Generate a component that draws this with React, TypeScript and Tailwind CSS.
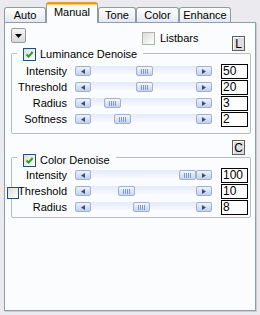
import React from 'react';

type Row = { label: string; value: string; thumb: number };

const LUMINANCE: Row[] = [
  { label: 'Intensity', value: '50', thumb: 61 },
  { label: 'Threshold', value: '20', thumb: 61 },
  { label: 'Radius', value: '3', thumb: 29 },
  { label: 'Softness', value: '2', thumb: 39 },
];

const COLOR: Row[] = [
  { label: 'Intensity', value: '100', thumb: 104 },
  { label: 'Threshold', value: '10', thumb: 43 },
  { label: 'Radius', value: '8', thumb: 58 },
];

const TABS = [
  { name: 'Auto', w: 'w-[42px]' },
  { name: 'Manual', w: 'w-[52px]' },
  { name: 'Tone', w: 'w-[38px]' },
  { name: 'Color', w: 'w-[43px]' },
  { name: 'Enhance', w: 'w-[52px]' },
];

const CheckBox = ({ checked, muted }: { checked?: boolean; muted?: boolean }) => (
  <div
    className={`w-[13px] h-[13px] shrink-0 border flex items-center justify-center bg-gradient-to-br from-[#dcdcd7] to-white ${
      muted ? 'border-[#b3b3ad]' : 'border-[#1c5180]'
    }`}
  >
    {checked && (
      <svg width="9" height="9" viewBox="0 0 9 9">
        <path d="M1.5 4.5 L3.6 6.6 L7.6 2" fill="none" stroke="#21a121" strokeWidth="2" />
      </svg>
    )}
  </div>
);

const ArrowBtn = ({ dir }: { dir: 'left' | 'right' }) => (
  <div className="w-[16px] h-[10px] rounded-[2px] border border-[#9db0d8] bg-gradient-to-b from-[#eef3fd] to-[#bfcff0] flex items-center justify-center">
    <svg width="4" height="5" viewBox="0 0 4 5">
      <polygon points={dir === 'left' ? '4,0 4,5 0,2.5' : '0,0 0,5 4,2.5'} fill="#3f4d66" />
    </svg>
  </div>
);

const ScrollBar = ({ thumb }: { thumb: number }) => (
  <div className="relative ml-[8px] w-[137px] h-[10px] flex justify-between bg-gradient-to-b from-[#e2eafb] to-[#fdfeff]">
    <ArrowBtn dir="left" />
    <div
      className="absolute top-0 w-[17px] h-[10px] rounded-[2px] border border-[#9db0d8] bg-gradient-to-b from-[#f2f6fe] to-[#c6d5f3] flex items-center justify-center gap-[1px]"
      style={{ left: thumb }}
    >
      <span className="w-px h-[5px] bg-[#8597bf]" />
      <span className="w-px h-[5px] bg-[#8597bf]" />
      <span className="w-px h-[5px] bg-[#8597bf]" />
      <span className="w-px h-[5px] bg-[#8597bf]" />
    </div>
    <ArrowBtn dir="right" />
  </div>
);

const SliderRow = ({ row }: { row: Row }) => (
  <div className="flex items-center h-[16px]">
    <span className="w-[55px] text-right leading-none">{row.label}</span>
    <ScrollBar thumb={row.thumb} />
    <div className="ml-[9px] w-[27px] h-[15px] border border-black bg-white pl-[1px] text-[12px] leading-[13px]">
      {row.value}
    </div>
  </div>
);

const Group = ({ title, rows, legendTop, rowsTop, bottom }: { title: string; rows: Row[]; legendTop: string; rowsTop: string; bottom: string }) => (
  <div className={`mt-[2px] ml-[6px] w-[240px] border border-[#b7bbc2] rounded-[2px] ${bottom}`}>
    <div className={`${legendTop} ml-[5px] px-[6px] w-fit h-[13px] flex items-center gap-[4px] bg-[#fbfcfe]`}>
      <CheckBox checked />
      <span className="leading-none">{title}</span>
    </div>
    <div className={rowsTop}>
      {rows.map(r => (
        <SliderRow key={r.label} row={r} />
      ))}
    </div>
  </div>
);

const SmallButton = ({ label }: { label: string }) => (
  <div className="w-[13px] h-[15px] border border-[#5e5e5e] bg-[#dedede] shadow-[inset_1px_1px_0_#ffffff] flex items-center justify-center text-[12px] leading-none">
    {label}
  </div>
);

export default function App() {
  return (
    <div className="relative w-[260px] h-[315px] bg-[#ebeaee] text-[11px] text-black font-['Liberation_Sans',Arial,sans-serif]">
      <div className="flex items-end h-[22px] pl-[4px]">
        {TABS.map(t =>
          t.name === 'Manual' ? (
            <div
              key={t.name}
              className={`${t.w} relative z-10 h-[21px] -mb-px border-x border-t-2 border-x-[#919b9c] border-t-[#e8962e] rounded-t-[3px] bg-[#fbfcfe] shadow-[inset_0_1px_0_#ffc95a] flex items-center justify-center pb-[2px]`}
            >
              {t.name}
            </div>
          ) : (
            <div
              key={t.name}
              className={`${t.w} h-[15px] border border-b-0 border-[#919b9c] rounded-t-[3px] bg-gradient-to-b from-white to-[#e3e8f1] flex items-center justify-center`}
            >
              {t.name}
            </div>
          )
        )}
      </div>

      <div className="ml-[4px] w-[252px] h-[289px] border border-[#8f9db3] bg-[#fbfcfe] shadow-[1px_1px_0_#c9ccd4] flex flex-col">
        <div className="flex items-start h-[28px]">
          <div className="mt-[5px] ml-[6px] w-[15px] h-[15px] rounded-[2px] border border-[#9a9a9a] bg-gradient-to-b from-[#f4f4f4] to-[#d9d9d9] flex items-center justify-center">
            <svg width="7" height="4" viewBox="0 0 7 4">
              <polygon points="0,0 7,0 3.5,4" fill="#000" />
            </svg>
          </div>
          <div className="mt-[9px] ml-[116px] flex items-center gap-[5px]">
            <CheckBox muted />
            <span className="leading-none">Listbars</span>
          </div>
          <div className="ml-auto mt-[13px] mr-[10px]">
            <SmallButton label="L" />
          </div>
        </div>

        <Group title="Luminance Denoise" rows={LUMINANCE} legendTop="-mt-[6px]" rowsTop="mt-[2px]" bottom="pb-[6px]" />

        <div className="self-end mt-[6px] mr-[10px]">
          <SmallButton label="C" />
        </div>

        <Group title="Color Denoise" rows={COLOR} legendTop="-mt-[4px]" rowsTop="mt-0" bottom="pb-[2px]" />
      </div>

      <div className="absolute left-[7px] top-[187px] w-[12px] h-[12px] border border-[#1c5180] bg-gradient-to-br from-[#dcdcd7] to-white" />
    </div>
  );
}
